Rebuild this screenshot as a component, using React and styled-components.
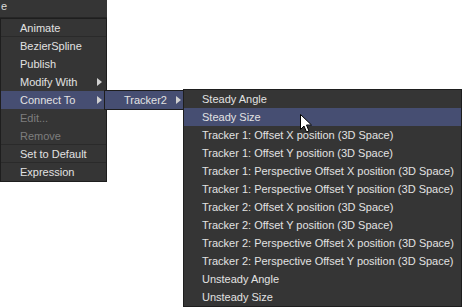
import React from "react";
import styled, { createGlobalStyle } from "styled-components";

const GlobalStyle = createGlobalStyle`
  body {
    margin: 0;
    background: #ffffff;
    font-family: Tahoma, "Liberation Sans", "DejaVu Sans", sans-serif;
  }
`;

const mainItems = [
  { label: "Animate", sep: true },
  { label: "BezierSpline" },
  { label: "Publish" },
  { label: "Modify With", arrow: true },
  { label: "Connect To", arrow: true, active: true },
  { label: "Edit...", disabled: true },
  { label: "Remove", disabled: true, sep: true },
  { label: "Set to Default", sep: true },
  { label: "Expression" },
];

const connectItems = [
  "Steady Angle",
  "Steady Size",
  "Tracker 1: Offset X position (3D Space)",
  "Tracker 1: Offset Y position (3D Space)",
  "Tracker 1: Perspective Offset X position (3D Space)",
  "Tracker 1: Perspective Offset Y position (3D Space)",
  "Tracker 2: Offset X position (3D Space)",
  "Tracker 2: Offset Y position (3D Space)",
  "Tracker 2: Perspective Offset X position (3D Space)",
  "Tracker 2: Perspective Offset Y position (3D Space)",
  "Unsteady Angle",
  "Unsteady Size",
];

const Arrow = () => (
  <svg width="5" height="8" viewBox="0 0 5 8">
    <path d="M0 0 L5 4 L0 8 Z" fill="#d0d0d0" />
  </svg>
);

const Cursor = () => (
  <svg width="13" height="20" viewBox="0 0 13 20">
    <path
      d="M0.5 0.5 L0.5 15.5 L4 12 L6.5 18 L9 17 L6.5 11 L11.5 11 Z"
      fill="#ffffff"
      stroke="#000000"
      strokeWidth="1"
    />
  </svg>
);

const App = () => {
  return (
    <Page>
      <GlobalStyle />
      <Left>
        <TitleBar>e</TitleBar>
        <Menu>
          {mainItems.map((it) => (
            <Item
              key={it.label}
              $active={it.active}
              $disabled={it.disabled}
              $sep={it.sep}
            >
              <Label>{it.label}</Label>
              {it.arrow && <Arrow />}
            </Item>
          ))}
        </Menu>
      </Left>
      <SubMenu $top={90} $width={80} $shift={-3}>
        <Item $active $right={2}>
          <Label>Tracker2</Label>
          <Arrow />
        </Item>
      </SubMenu>
      <SubMenu $top={89} $width={279} $shift={-1}>
        {connectItems.map((label) => (
          <Item key={label} $active={label === "Steady Size"}>
            <Label $pad={18}>{label}</Label>
          </Item>
        ))}
      </SubMenu>
      <Pointer>
        <Cursor />
      </Pointer>
    </Page>
  );
};

const Page = styled.div`
  position: relative;
  display: flex;
  align-items: flex-start;
  width: 470px;
  height: 307px;
  overflow: hidden;
`;

const Left = styled.div`
  display: flex;
  flex-direction: column;
  width: 107px;
`;

const TitleBar = styled.div`
  height: 17px;
  background: #353535;
  border-bottom: 1px solid #262626;
  color: #dcdcdc;
  font-size: 11px;
  line-height: 12px;
  padding-left: 1px;
`;

const Menu = styled.div`
  background: #353535;
  border: 1px solid #1e1e1e;
`;

const SubMenu = styled(Menu)`
  margin-top: ${(p) => p.$top}px;
  margin-left: ${(p) => p.$shift}px;
  width: ${(p) => p.$width}px;
  box-sizing: border-box;
`;

const Item = styled.div`
  display: flex;
  align-items: center;
  height: ${(p) => (p.$sep ? 17 : 18)}px;
  padding-right: ${(p) => (p.$right != null ? p.$right : 4)}px;
  background: ${(p) => (p.$active ? "#464e72" : "transparent")};
  color: ${(p) => (p.$disabled ? "#7e7e7e" : "#e2e2e2")};
  border-bottom: ${(p) => (p.$sep ? "1px solid #2a2a2a" : "none")};
  font-size: 11px;
  white-space: nowrap;
`;

const Label = styled.span`
  flex: 1;
  padding-left: ${(p) => p.$pad || 19}px;
`;

const Pointer = styled.div`
  position: absolute;
  left: 300px;
  top: 114px;
  line-height: 0;
`;

export default App;
